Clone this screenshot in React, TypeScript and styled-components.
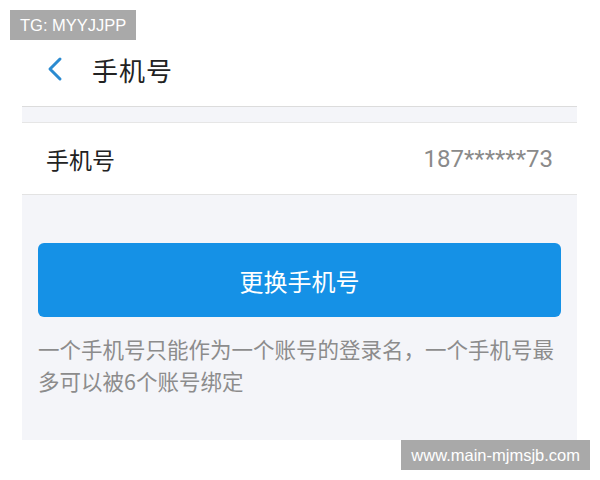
import styled, { createGlobalStyle } from 'styled-components'

const GlobalStyle = createGlobalStyle`
  html, body {
    margin: 0;
    padding: 0;
    background: #ffffff;
  }
  body {
    font-family: "Noto Sans CJK SC", "Noto Sans", sans-serif;
  }
`

const Page = styled.div`
  position: relative;
  width: 600px;
  height: 480px;
  overflow: hidden;
  background: #ffffff;
`

const Watermark = styled.div<{ $corner: 'tl' | 'br' }>`
  position: absolute;
  ${(p) => (p.$corner === 'tl' ? 'left: 10px; top: 10px;' : 'right: 10px; top: 440px;')}
  height: 30px;
  padding: 0 10px;
  display: flex;
  align-items: center;
  background: #a9a9a9;
  color: #ffffff;
  font-family: "Liberation Sans", Arial, sans-serif;
  font-size: 16.5px;
  z-index: 2;
`

const Header = styled.div`
  height: 106px;
  display: flex;
  align-items: center;
  padding: 32px 0 0 44px;
  box-sizing: border-box;
`

const BackIcon = styled.svg`
  width: 22px;
  height: 26px;
  margin-right: 26px;
`

const Title = styled.h1`
  margin: 0;
  font-size: 26px;
  font-weight: 400;
  color: #222;
  letter-spacing: 1px;
`

const Panel = styled.div`
  margin: 0 23px 0 22px;
  height: 334px;
  background: #f4f5f9;
  border-top: 1px solid #dcdcdc;
  padding-top: 15px;
  box-sizing: border-box;
`

const Row = styled.div`
  height: 73px;
  background: #ffffff;
  border-top: 1px solid #e6e6e6;
  border-bottom: 1px solid #e3e3e3;
  display: flex;
  align-items: center;
  justify-content: space-between;
  padding: 0 24px;
  box-sizing: border-box;
`

const Label = styled.span`
  font-size: 23px;
  color: #222;
`

const Value = styled.span`
  font-family: Roboto, "Noto Sans", sans-serif;
  font-size: 24px;
  color: #8a8a8a;
`

const Body = styled.div`
  padding: 48px 16px 0 16px;
`

const Button = styled.button`
  width: 100%;
  height: 74px;
  border: none;
  border-radius: 6px;
  background: #1591e6;
  color: #ffffff;
  font-family: "Noto Sans CJK SC", sans-serif;
  font-size: 24px;
`

const Note = styled.p`
  margin: 16px 0 0 0;
  font-size: 21.5px;
  line-height: 32px;
  color: #8c8c8c;
`

function App() {
  return (
    <Page>
      <GlobalStyle />
      <Watermark $corner="tl">TG: MYYJJPP</Watermark>
      <Header>
        <BackIcon viewBox="0 0 22 26">
          <path d="M16 3 L6 13 L16 23" fill="none" stroke="#2b8bd1" strokeWidth="3" strokeLinecap="round" strokeLinejoin="round" />
        </BackIcon>
        <Title>手机号</Title>
      </Header>
      <Panel>
        <Row>
          <Label>手机号</Label>
          <Value>187******73</Value>
        </Row>
        <Body>
          <Button>更换手机号</Button>
          <Note>一个手机号只能作为一个账号的登录名，一个手机号最多可以被6个账号绑定</Note>
        </Body>
      </Panel>
      <Watermark $corner="br">www.main-mjmsjb.com</Watermark>
    </Page>
  )
}

export default App
